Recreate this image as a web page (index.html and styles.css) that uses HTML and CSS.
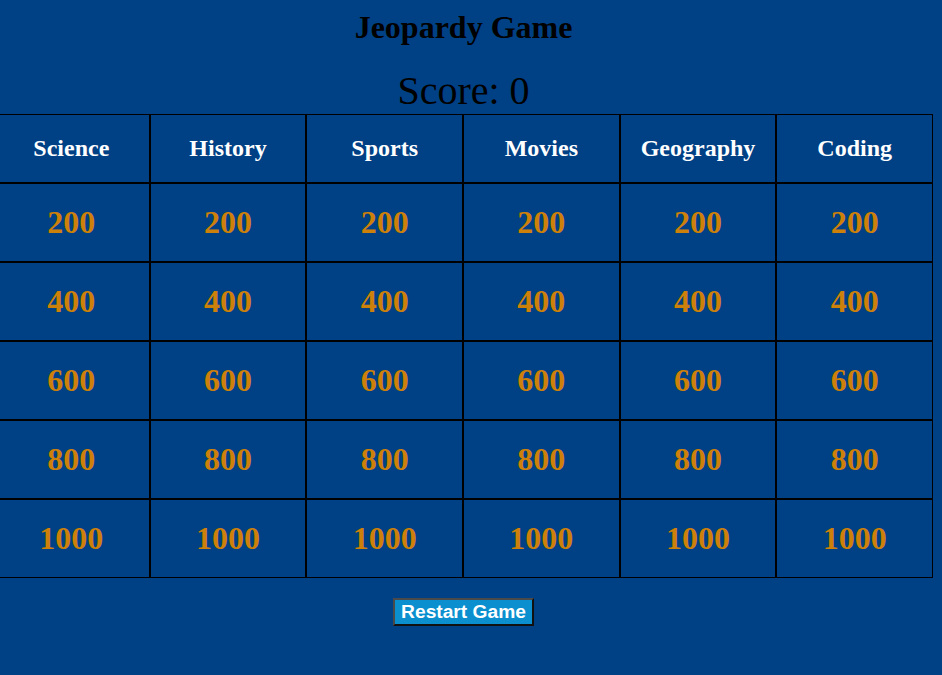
FILE: index.html
```html
<!DOCTYPE html>
<html lang="en">
<head>
    <meta charset="UTF-8">
    <meta name="viewport" content="width=device-width, initial-scale=1.0">
    <title>Jeopardy Game</title>
    <link rel="stylesheet" href="styles.css">
</head>
<body>

<div class="page">
    <h1>Jeopardy Game</h1>
    <div class="score">Score: <span id="score">0</span></div>

    <!-- Игровое поле -->
    <div class="board">
        <div class="category">Science</div>
        <div class="category">History</div>
        <div class="category">Sports</div>
        <div class="category">Movies</div>
        <div class="category">Geography</div>
        <div class="category">Coding</div>

        <div class="question">200</div>
        <div class="question">200</div>
        <div class="question">200</div>
        <div class="question">200</div>
        <div class="question">200</div>
        <div class="question">200</div>

        <div class="question">400</div>
        <div class="question">400</div>
        <div class="question">400</div>
        <div class="question">400</div>
        <div class="question">400</div>
        <div class="question">400</div>

        <div class="question">600</div>
        <div class="question">600</div>
        <div class="question">600</div>
        <div class="question">600</div>
        <div class="question">600</div>
        <div class="question">600</div>

        <div class="question">800</div>
        <div class="question">800</div>
        <div class="question">800</div>
        <div class="question">800</div>
        <div class="question">800</div>
        <div class="question">800</div>

        <div class="question">1000</div>
        <div class="question">1000</div>
        <div class="question">1000</div>
        <div class="question">1000</div>
        <div class="question">1000</div>
        <div class="question">1000</div>
    </div>

    <button class="restart">Restart Game</button>
</div>

</body>
</html>
```

FILE: styles.css
```css
/* Общие стили */
body {
    margin: 0;
    background-color: #004085;
    font-family: "Liberation Serif", "Times New Roman", serif;
    color: #000;
}

.page {
    width: 927px;
    text-align: center;
}

h1 {
    font-size: 32px;
    line-height: 37px;
    margin: 9px 0 0;
}

.score {
    font-size: 40px;
    line-height: 46px;
    margin-top: 22px;
}

/* Игровое поле */
.board {
    display: grid;
    grid-template-columns: repeat(6, 1fr);
    grid-template-rows: 69px repeat(5, 79px);
    width: 940px;
    margin: 0 0 0 -7px;
}

.category,
.question {
    display: flex;
    align-items: center;
    justify-content: center;
    border: 1px solid #000;
    font-weight: bold;
}

.category {
    font-size: 24px;
    color: #fff;
}

.question {
    font-size: 32px;
    color: #cd800a;
    cursor: pointer;
}

.restart {
    margin-top: 20px;
    padding: 1px 6px;
    font-family: "Liberation Sans", Arial, sans-serif;
    font-size: 19.2px;
    font-weight: bold;
    color: #fff;
    background-color: #0b8fcf;
    border: 2px solid;
    border-color: #4a4a4a #111 #111 #4a4a4a;
    cursor: pointer;
}
```
